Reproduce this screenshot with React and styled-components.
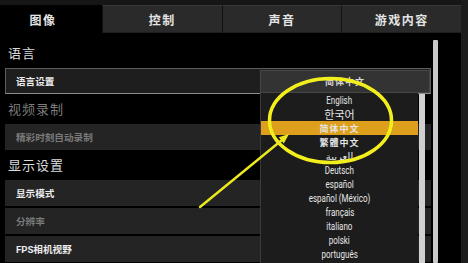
import React from "react";
import styled, { createGlobalStyle } from "styled-components";

const GlobalStyle = createGlobalStyle`
  html, body {
    margin: 0;
    padding: 0;
    background: #000;
    overflow: hidden;
  }
`;

const CJK = `"Noto Sans CJK SC", "Noto Sans", "DejaVu Sans", sans-serif`;

const Screen = styled.div`
  position: relative;
  width: 468px;
  height: 263px;
  display: flex;
  overflow: hidden;
  background: #000;
  font-family: ${CJK};
`;

const Main = styled.div`
  flex: 1;
  display: flex;
  flex-direction: column;
`;

const SideStrip = styled.div`
  width: 7px;
  background: #1c1c1c;
`;

const TopStrip = styled.div`
  height: 5px;
  background: #161616;
`;

const TabBar = styled.div`
  height: 28px;
  display: flex;
`;

const Tab = styled.div`
  flex: ${(p) => (p.$first ? "0 0 102px" : "1")};
  box-sizing: border-box;
  padding-right: ${(p) => (p.$first ? "17px" : "0")};
  display: flex;
  align-items: center;
  justify-content: center;
  background: ${(p) => (p.$active ? "#000" : "#2a2a2a")};
  border-top: 1px solid ${(p) => (p.$active ? "#000" : "#383838")};
  border-left: 1px solid ${(p) => (p.$first ? "transparent" : "#121212")};
  border-bottom: 1px solid ${(p) => (p.$active ? "#000" : "#1e1e1e")};
  color: #e4e4e4;
  font-size: 12px;
  font-weight: 700;
  letter-spacing: 1.5px;
`;

const Body = styled.div`
  position: relative;
  flex: 1;
  display: flex;
`;

const Content = styled.div`
  width: 431px;
  box-sizing: border-box;
  padding: 5px 0 0 5px;
  display: flex;
  flex-direction: column;
`;

const SectionTitle = styled.div`
  height: 30px;
  line-height: 30px;
  padding-left: 3px;
  font-size: 13px;
  letter-spacing: 1px;
  color: ${(p) => (p.$dim ? "#7c7c7c" : "#dcdcdc")};
`;

const RowGroup = styled.div`
  display: flex;
  flex-direction: column;
  gap: 2px;
`;

const Row = styled.div`
  height: 26px;
  box-sizing: border-box;
  display: flex;
  align-items: center;
  padding-left: 10px;
  font-size: 9.6px;
  font-weight: 700;
  color: ${(p) => (p.$dim ? "#7a7a7a" : "#ececec")};
  background: ${(p) => (p.$selected ? "#1e1e1e" : "#242424")};
  border: 1px solid ${(p) => (p.$selected ? "#5e5e5e" : "#242424")};
  border-bottom-color: ${(p) => (p.$selected ? "#8c8c8c" : "#242424")};
  font-family: ${(p) => (p.$latin ? `"Roboto", ${CJK}` : CJK)};
`;

const ScrollTrack = styled.div`
  width: 5px;
  margin: 7px 0 0 2px;
  background: #c9c9c9;
  border-radius: 1px;
`;

const Dropdown = styled.div`
  position: absolute;
  left: 260px;
  top: 37px;
  bottom: 0;
  width: 170px;
  display: flex;
  flex-direction: column;
`;

const DropHeader = styled.div`
  height: 23px;
  box-sizing: border-box;
  background: #333;
  border: 1px solid #464646;
  display: flex;
  align-items: center;
  justify-content: center;
  color: #d8d8d8;
  font-size: 9px;
  font-weight: 700;
  letter-spacing: 1px;
`;

const DropBody = styled.div`
  flex: 1;
  display: flex;
`;

const List = styled.div`
  width: 158px;
  background: #1c1c1c;
  border-left: 1px solid #3a3a3a;
  box-sizing: border-box;
  display: flex;
  flex-direction: column;
`;

const fontFor = (kind) =>
  kind === "cjk"
    ? CJK
    : kind === "ko"
    ? `"Noto Sans CJK KR", ${CJK}`
    : `"Roboto", "DejaVu Sans", sans-serif`;

const Item = styled.div`
  height: 14px;
  flex: 0 0 14px;
  display: flex;
  align-items: center;
  justify-content: center;
  background: ${(p) => (p.$active ? "#dd9f1c" : "transparent")};
  color: #e6e6e6;
  font-family: ${(p) => fontFor(p.$kind)};
  font-size: ${(p) =>
    p.$kind === "cjk" ? "9px" : p.$kind === "ko" ? "11px" : "10px"};
  font-weight: ${(p) => (p.$kind === "cjk" ? 700 : 400)};
  letter-spacing: ${(p) => (p.$kind === "cjk" ? "1px" : "0")};
`;

const ItemText = styled.span`
  display: inline-block;
  transform: ${(p) => (p.$kind === "latin" ? "scaleX(0.8)" : "none")};
  white-space: nowrap;
`;

const ListScroll = styled.div`
  width: 6px;
  margin: 1px 0 0 1px;
  background: #d0d0d0;
`;

const Annotation = styled.svg`
  position: absolute;
  left: 0;
  top: 0;
  pointer-events: none;
`;

const tabs = ["图像", "控制", "声音", "游戏内容"];

const languages = [
  { label: "English", kind: "latin" },
  { label: "한국어", kind: "ko" },
  { label: "简体中文", kind: "cjk", active: true },
  { label: "繁體中文", kind: "cjk" },
  { label: "العربية", kind: "ar" },
  { label: "Deutsch", kind: "latin" },
  { label: "español", kind: "latin" },
  { label: "español (México)", kind: "latin" },
  { label: "français", kind: "latin" },
  { label: "italiano", kind: "latin" },
  { label: "polski", kind: "latin" },
  { label: "português", kind: "latin" },
];

export default function App() {
  return (
    <>
      <GlobalStyle />
      <Screen>
        <Main>
          <TopStrip />
          <TabBar>
            {tabs.map((t, i) => (
              <Tab key={t} $first={i === 0} $active={i === 0}>
                {t}
              </Tab>
            ))}
          </TabBar>
          <Body>
            <Content>
              <SectionTitle>语言</SectionTitle>
              <Row $selected>语言设置</Row>
              <SectionTitle $dim>视频录制</SectionTitle>
              <Row $dim>精彩时刻自动录制</Row>
              <SectionTitle>显示设置</SectionTitle>
              <RowGroup>
                <Row>显示模式</Row>
                <Row $dim>分辨率</Row>
                <Row $latin>FPS相机视野</Row>
              </RowGroup>
            </Content>
            <ScrollTrack />
            <Dropdown>
              <DropHeader>简体中文</DropHeader>
              <DropBody>
                <List>
                  {languages.map((l) => (
                    <Item key={l.label} $kind={l.kind} $active={l.active}>
                      <ItemText $kind={l.kind}>{l.label}</ItemText>
                    </Item>
                  ))}
                </List>
                <ListScroll />
              </DropBody>
            </Dropdown>
          </Body>
        </Main>
        <SideStrip />
        <Annotation width="468" height="263" viewBox="0 0 468 263">
          <ellipse
            cx="330.5"
            cy="120.5"
            rx="61"
            ry="42"
            fill="none"
            stroke="#f2ef1c"
            strokeWidth="3.5"
          />
          <line
            x1="200"
            y1="207"
            x2="282"
            y2="140"
            stroke="#ecea1e"
            strokeWidth="2.4"
            strokeLinecap="round"
          />
          <polygon points="289,134 283.8,143.4 278.8,137.2" fill="#ecea1e" />
        </Annotation>
      </Screen>
    </>
  );
}
